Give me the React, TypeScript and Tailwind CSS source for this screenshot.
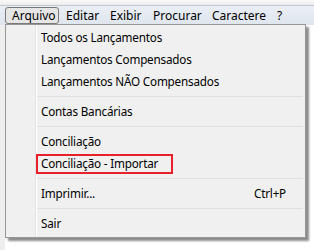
const menuBar = [
  { label: "Arquivo", w: "w-[54px]", active: true },
  { label: "Editar", w: "w-[44px]" },
  { label: "Exibir", w: "w-[43px]" },
  { label: "Procurar", w: "w-[59px]" },
  { label: "Caractere", w: "w-[65px]" },
  { label: "?", w: "w-[20px]" },
];

type Entry =
  | { kind: "item"; label: string; shortcut?: string; marked?: boolean }
  | { kind: "sep" };

const entries: Entry[] = [
  { kind: "item", label: "Todos os Lançamentos" },
  { kind: "item", label: "Lançamentos Compensados" },
  { kind: "item", label: "Lançamentos NÃO Compensados" },
  { kind: "sep" },
  { kind: "item", label: "Contas Bancárias" },
  { kind: "sep" },
  { kind: "item", label: "Conciliação" },
  { kind: "item", label: "Conciliação - Importar", marked: true },
  { kind: "sep" },
  { kind: "item", label: "Imprimir...", shortcut: "Ctrl+P" },
  { kind: "sep" },
  { kind: "item", label: "Sair" },
];

export default function App() {
  return (
    <div
      className="relative h-[250px] w-[314px] overflow-hidden bg-white text-[12px] text-black"
      style={{ fontFamily: '"Noto Sans", "Open Sans", sans-serif' }}
    >
      <div className="h-[5px] bg-gradient-to-b from-[#fafafa] to-[#ececec]" />
      <div className="flex h-[20px] items-center border-t border-[#c4c8cf] bg-gradient-to-b from-[#eaeef5] to-[#dfe5ee] pl-[5px]">
        {menuBar.map((m) => (
          <div
            key={m.label}
            className={`flex h-[17px] items-center pl-[6px] ${m.w} ${
              m.active ? "rounded-[3px] border border-[#7a7a7a] bg-[#e6e6e6]" : "border border-transparent"
            }`}
          >
            {m.label}
          </div>
        ))}
      </div>
      <div className="h-full w-[5px] bg-[#eeeeee]" />

      {/* dropdown */}
      <div className="absolute left-[5px] top-[24px] w-[301px] border border-[#979797] bg-[#f0f0f0] py-[2px] text-[11.7px] tracking-[-0.2px] shadow-[3px_3px_2px_rgba(0,0,0,0.45)]">
        <div className="absolute bottom-0 left-[29px] top-0 w-px bg-[#e2e3e3]" />
        <div className="absolute bottom-0 left-[30px] top-0 w-px bg-white" />
        {entries.map((e, i) =>
          e.kind === "sep" ? (
            <div key={i} className="flex h-[8px] items-center pl-[31px] pr-[2px]">
              <div className="h-[2px] w-full border-t border-[#e0e0e0] border-b-white" />
            </div>
          ) : (
            <div key={i} className="relative flex h-[22px] items-center pl-[30px] pr-[19px]">
              {e.marked ? (
                <span className="flex h-[20px] w-[137px] items-center border-2 border-[#e8202a] pl-[3px]">
                  {e.label}
                </span>
              ) : (
                <span className="pl-[5px]">{e.label}</span>
              )}
              {e.shortcut && <span className="ml-auto">{e.shortcut}</span>}
            </div>
          )
        )}
      </div>
    </div>
  );
}
